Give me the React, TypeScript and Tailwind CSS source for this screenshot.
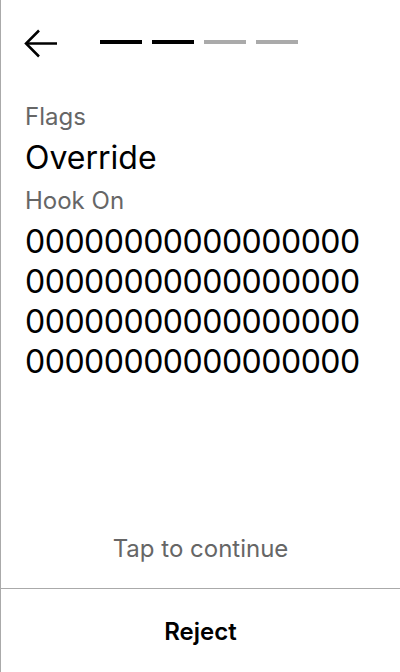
const steps = [true, true, false, false];

const rows = Array.from({ length: 4 }, () => "0".repeat(17));

const BackArrow = () => (
  <svg width="34" height="29" viewBox="0 0 34 29" fill="none" stroke="black" strokeWidth="2.5" strokeLinecap="butt">
    <path d="M15 1.5 2 14.5 15 27.5" />
    <path d="M2 14.5H33" />
  </svg>
);

export default function App() {
  return (
    <div
      className="h-[672px] w-[400px] flex flex-col bg-white border-l border-[#aaaaaa] text-black"
      style={{ fontFamily: "Inter, 'Noto Sans', sans-serif" }}
    >
      <div className="flex items-center pl-[23px] pt-[29px] h-[58px]">
        <button className="flex items-center">
          <BackArrow />
        </button>
        <div className="flex gap-[10px] ml-[42px] -mt-[3px]">
          {steps.map((done, i) => (
            <div key={i} className={`w-[42px] h-[4px] ${done ? "bg-black" : "bg-[#aaaaaa]"}`} />
          ))}
        </div>
      </div>

      <div className="flex-1 px-[24px] pt-[43px]">
        <p className="text-[24px] leading-[32px] text-[#666666]">Flags</p>
        <h1 className="mt-[5px] text-[32px] leading-[40px]">Override</h1>
        <p className="mt-[7px] text-[24px] leading-[32px] text-[#666666]">Hook On</p>
        <div className="mt-[5px] text-[32px] leading-[40px] tracking-[-0.5px]">
          {rows.map((r, i) => (
            <div key={i}>{r}</div>
          ))}
        </div>
      </div>

      <p className="text-center text-[24px] leading-[32px] text-[#666666] pb-[23px]">Tap to continue</p>
      <div className="border-t border-[#aaaaaa] h-[84px] flex items-center justify-center pt-[2px]">
        <button className="text-[24px] leading-[32px] font-semibold">Reject</button>
      </div>
    </div>
  );
}
